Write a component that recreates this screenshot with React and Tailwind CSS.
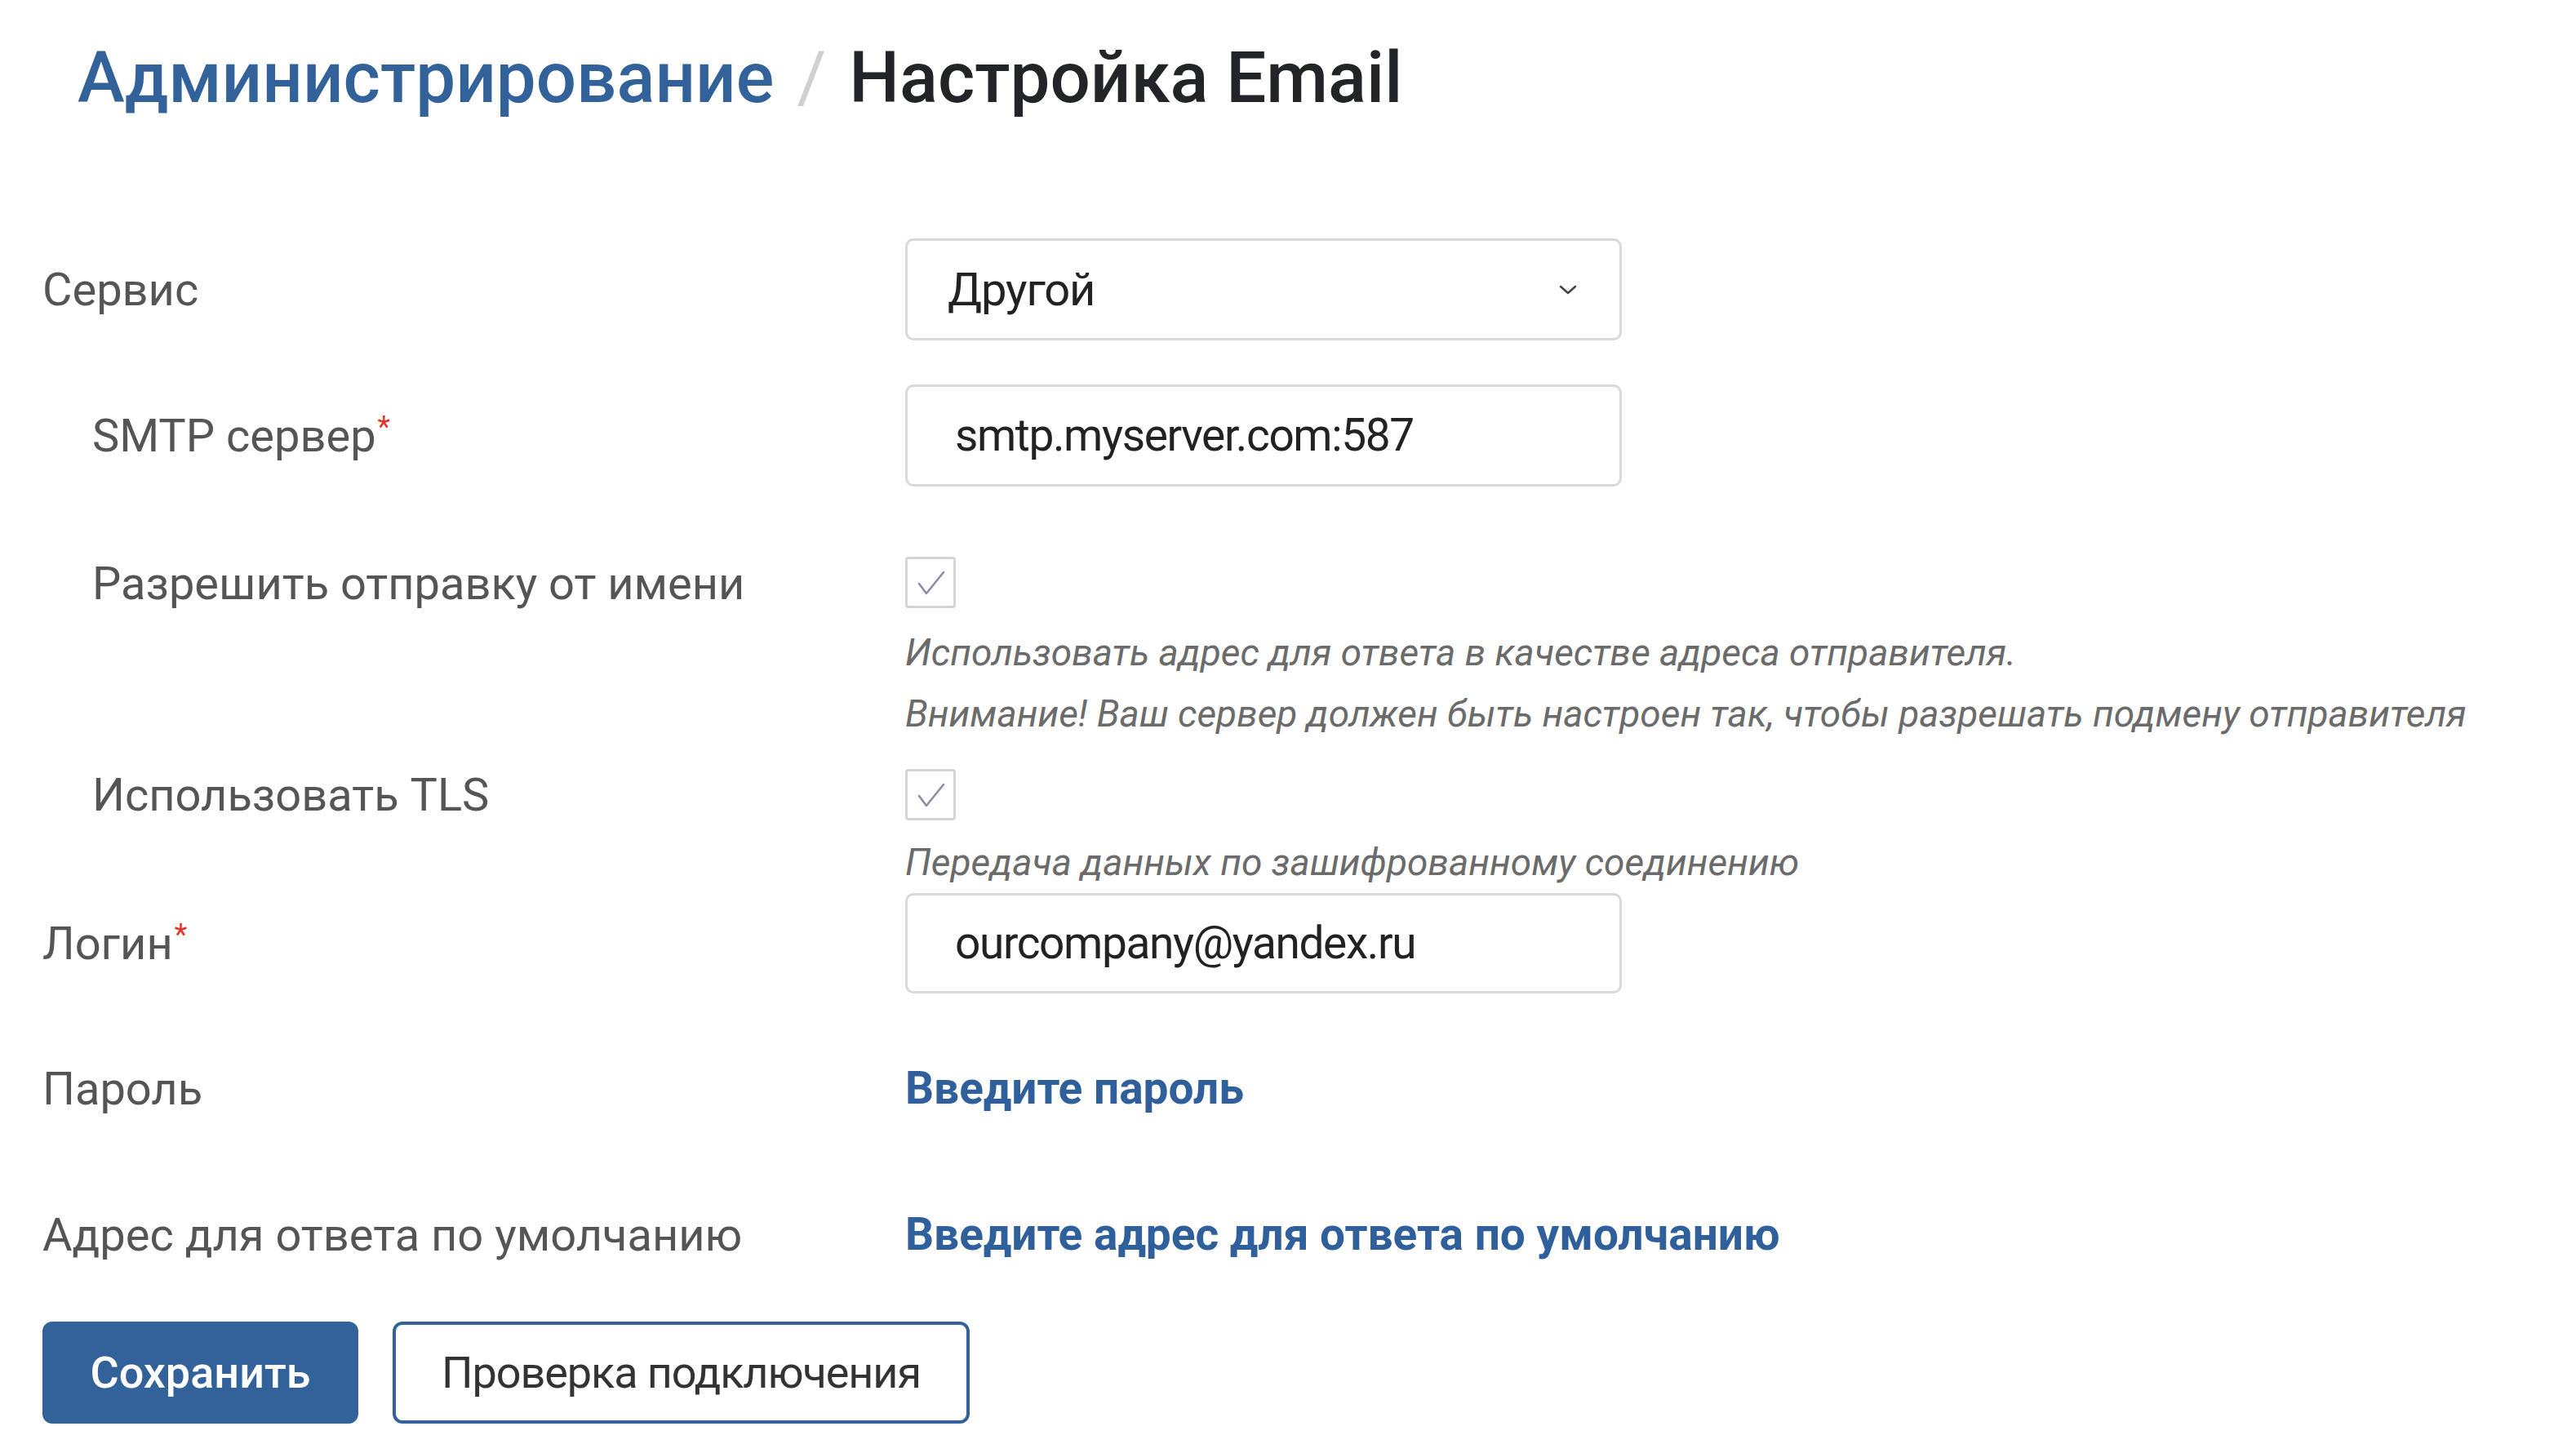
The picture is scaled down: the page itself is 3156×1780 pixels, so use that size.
import React from 'react';

const Req = () => <span className="relative -top-[18px] ml-[2px] text-[36px] text-[#e0352b]">*</span>;

const Label = ({ children, indent }) => (
  <div className={`w-[1057px] shrink-0 text-[56px] text-[#555555] ${indent ? 'pl-[61px]' : ''}`}>{children}</div>
);

const Check = () => (
  <div className="flex h-[63px] w-[62px] items-center justify-center rounded-[4px] border-[3px] border-[#d4d4d4] bg-white">
    <svg width="44" height="36" viewBox="0 0 44 36" fill="none">
      <path d="M8 19 L17 31 L38 5" stroke="#8a8ca6" strokeWidth="2.5" strokeLinecap="round" strokeLinejoin="round" />
    </svg>
  </div>
);

const App = () => {
  return (
    <div className="min-h-[1780px] w-[3156px] bg-white pl-[52px] font-['Roboto',sans-serif]">
      {/* breadcrumb */}
      <div className="flex items-baseline pl-[43px] pt-[52px] text-[87px] font-medium leading-none">
        <span className="text-[#33629a]">Администрирование</span>
        <span className="mx-[28px] font-normal text-[#d0d0d0]">/</span>
        <span className="text-[#222428]">Настройка Email</span>
      </div>

      <div className="mt-[153px]">
        <div className="flex h-[125px] items-center">
          <Label>Сервис</Label>
          <div className="flex h-[125px] w-[878px] items-center justify-between rounded-[10px] border-[3px] border-[#d9d9d9] pl-[49px] pr-[48px] text-[56px] tracking-[-0.02em] text-[#222]">
            <span>Другой</span>
            <svg width="30" height="18" viewBox="0 0 30 18" fill="none">
              <path d="M6 5 L15 13 L24 5" stroke="#444" strokeWidth="2.5" strokeLinecap="round" strokeLinejoin="round" />
            </svg>
          </div>
        </div>

        <div className="mt-[54px] flex h-[125px] items-center">
          <Label indent>SMTP сервер<Req /></Label>
          <div className="flex h-[125px] w-[878px] items-center rounded-[10px] border-[3px] border-[#d9d9d9] pl-[58px] text-[55px] tracking-[-0.025em] text-[#222]">
            smtp.myserver.com:587
          </div>
        </div>

        <div className="mt-[54px] flex items-start">
          <div className="flex h-[130px] items-center">
            <Label indent>Разрешить отправку от имени</Label>
          </div>
          <div className="pt-[32px]">
            <Check />
            <div className="mt-[17px] text-[46px] italic leading-[75px] text-[#6b6b6b]">
              <div>Использовать адрес для ответа в качестве адреса отправителя.</div>
              <div>Внимание! Ваш сервер должен быть настроен так, чтобы разрешать подмену отправителя</div>
            </div>
          </div>
        </div>

        <div className="flex items-start">
          <div className="flex h-[124px] items-center">
            <Label indent>Использовать TLS</Label>
          </div>
          <div className="pt-[30px]">
            <Check />
            <div className="mt-[14px] text-[46px] italic leading-[75px] text-[#6b6b6b]">
              Передача данных по зашифрованному соединению
            </div>
          </div>
        </div>

        <div className="flex h-[123px] items-center">
          <Label>Логин<Req /></Label>
          <div className="flex h-[123px] w-[878px] items-center rounded-[10px] border-[3px] border-[#d9d9d9] pl-[58px] text-[55px] tracking-[-0.025em] text-[#222]">
            ourcompany@yandex.ru
          </div>
        </div>

        <div className="mt-[54px] flex h-[125px] items-center">
          <Label>Пароль</Label>
          <span className="text-[55px] font-bold text-[#30609b]">Введите пароль</span>
        </div>

        <div className="mt-[54px] flex h-[125px] items-center">
          <Label>Адрес для ответа по умолчанию</Label>
          <span className="text-[55px] font-bold text-[#30609b]">Введите адрес для ответа по умолчанию</span>
        </div>

        <div className="mt-[44px] flex gap-[42px]">
          <button className="h-[125px] w-[387px] rounded-[12px] bg-[#33629a] text-[54px] font-medium text-white">
            Сохранить
          </button>
          <button className="h-[125px] w-[707px] rounded-[12px] border-[4px] border-[#33629a] bg-white text-[54px] tracking-[-0.02em] text-[#333]">
            Проверка подключения
          </button>
        </div>
      </div>
    </div>
  );
};

export default App;
